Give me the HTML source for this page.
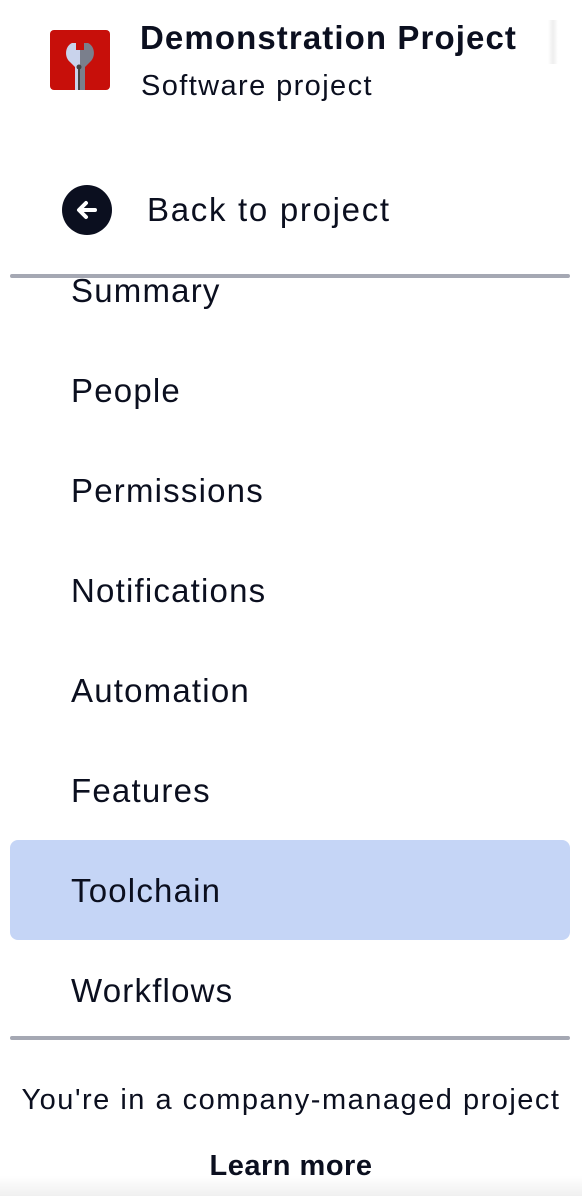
<!DOCTYPE html>
<html><head><style>
body{margin:0;width:582px;height:1196px;background:#fff;font-family:"Liberation Sans",sans-serif;color:#0b0f1f;position:relative;overflow:hidden}
.a{position:absolute;white-space:nowrap}
.item{position:absolute;left:71px;font-size:33px;letter-spacing:1.2px;line-height:40px}
</style></head><body>
<div class="a" style="left:50px;top:30px;width:60px;height:60px;background:#c70f0a;border-radius:4px;overflow:hidden">
<svg width="60" height="60" viewBox="0 0 60 60">
<path d="M22 13 C15 16 14 27 20 32 L25 37 L25 60 L30 60 L30 20 L26 20 L26 13 Z" fill="#c9d3ec"/>
<path d="M38 13 C45 16 46 27 40 32 L35 37 L35 60 L30 60 L30 20 L34 20 L34 13 Z" fill="#7a7f8c"/>
<circle cx="29" cy="37" r="2.5" fill="#444"/><rect x="28" y="39" width="2" height="21" fill="#444"/>
</svg></div>
<div class="a" style="left:140px;top:18px;font-size:33px;letter-spacing:1.1px;font-weight:bold;line-height:40px">Demonstration Project</div>
<div class="a" style="left:141px;top:68px;font-size:29px;letter-spacing:1.4px;line-height:36px">Software project</div>
<div class="a" style="left:548px;top:20px;width:10px;height:44px;background:linear-gradient(90deg,#fff,#eee,#fff)"></div>
<div class="a" style="left:62px;top:185px;width:50px;height:50px;border-radius:50%;background:#0b0f1f">
<svg width="50" height="50" viewBox="0 0 50 50"><path d="M33 25H18M24 18l-7 7 7 7" stroke="#fff" stroke-width="4" fill="none" stroke-linecap="round" stroke-linejoin="round"/></svg></div>
<div class="a" style="left:147px;top:190px;font-size:33px;letter-spacing:1.7px;line-height:40px">Back to project</div>
<div class="a" style="left:10px;top:274px;width:560px;height:4px;background:#a5a8b3;border-radius:2px"></div>
<div class="item" style="top:271px">Summary</div>
<div class="item" style="top:371px">People</div>
<div class="item" style="top:471px">Permissions</div>
<div class="item" style="top:571px">Notifications</div>
<div class="item" style="top:671px">Automation</div>
<div class="item" style="top:771px">Features</div>
<div class="a" style="left:10px;top:840px;width:560px;height:100px;background:#c5d5f6;border-radius:8px"></div>
<div class="item" style="top:871px">Toolchain</div>
<div class="item" style="top:971px">Workflows</div>
<div class="a" style="left:10px;top:1036px;width:560px;height:4px;background:#a5a8b3;border-radius:2px"></div>
<div class="a" style="left:0;width:582px;text-align:center;top:1082px;font-size:29px;letter-spacing:1.5px;line-height:36px">You're in a company-managed project</div>
<div class="a" style="left:0;width:582px;text-align:center;top:1148px;font-size:29px;letter-spacing:0.5px;font-weight:bold;line-height:36px">Learn more</div>
<div class="a" style="left:0;top:1176px;width:582px;height:20px;background:linear-gradient(#fff,#f0f0f0);z-index:-1"></div>
</body></html>
